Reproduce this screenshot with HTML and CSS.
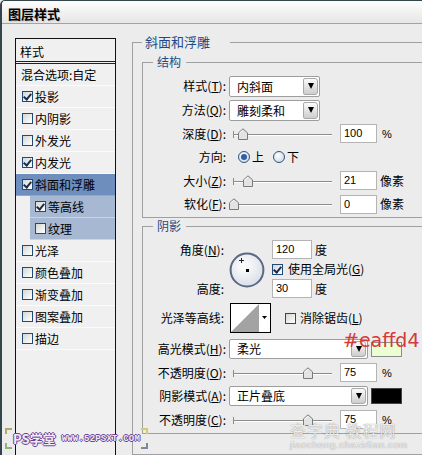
FILE: index.html
```html
<!DOCTYPE html>
<html lang="zh-CN">
<head>
<meta charset="utf-8">
<title>图层样式</title>
<link rel="stylesheet" href="styles.css">
</head>
<body>
<div class="window">
  <div class="titlebar">图层样式</div>
  <div class="dialog">
    <div class="stylelist">
      <div class="list-head">样式</div>
      <div class="list-item plain">混合选项:自定</div>
      <div class="list-item"><span class="cb checked"></span>投影</div>
      <div class="list-item"><span class="cb"></span>内阴影</div>
      <div class="list-item"><span class="cb"></span>外发光</div>
      <div class="list-item"><span class="cb checked"></span>内发光</div>
      <div class="list-item selected"><span class="cb checked"></span>斜面和浮雕</div>
      <div class="list-item sub"><span class="cb checked"></span>等高线</div>
      <div class="list-item sub"><span class="cb"></span>纹理</div>
      <div class="list-item"><span class="cb"></span>光泽</div>
      <div class="list-item"><span class="cb"></span>颜色叠加</div>
      <div class="list-item"><span class="cb"></span>渐变叠加</div>
      <div class="list-item"><span class="cb"></span>图案叠加</div>
      <div class="list-item"><span class="cb"></span>描边</div>
    </div>

    <div class="settings">
      <fieldset class="group outer">
        <legend>斜面和浮雕</legend>

        <fieldset class="group struct">
          <legend>结构</legend>
          <div class="row h24">
            <span class="lbl">样式(<u>T</u>):</span>
            <div class="select w90"><span class="val">内斜面</span><span class="btn"></span></div>
          </div>
          <div class="row h24">
            <span class="lbl">方法(<u>Q</u>):</span>
            <div class="select w90"><span class="val">雕刻柔和</span><span class="btn"></span></div>
          </div>
          <div class="row h23">
            <span class="lbl">深度(<u>D</u>):</span>
            <div class="slider"><span class="thumb" style="left:10.5%"><svg width="10" height="12" viewBox="0 0 10 12"><path d="M0.5 11.5V4.8L5 0.8 9.5 4.8v6.7z" fill="#e3e3e3" stroke="#7a7a7a"/><path d="M1.5 5.2L5 2.1" stroke="#fff" fill="none"/></svg></span></div>
            <span class="num">100</span><span class="unit">%</span>
          </div>
          <div class="row h24">
            <span class="lbl">方向:</span>
            <span class="radio on first"></span><span class="rtext">上</span>
            <span class="radio second"></span><span class="rtext">下</span>
          </div>
          <div class="row h23">
            <span class="lbl">大小(<u>Z</u>):</span>
            <div class="slider"><span class="thumb" style="left:15%"><svg width="10" height="12" viewBox="0 0 10 12"><path d="M0.5 11.5V4.8L5 0.8 9.5 4.8v6.7z" fill="#e3e3e3" stroke="#7a7a7a"/><path d="M1.5 5.2L5 2.1" stroke="#fff" fill="none"/></svg></span></div>
            <span class="num">21</span><span class="unit px">像素</span>
          </div>
          <div class="row h24">
            <span class="lbl">软化(<u>F</u>):</span>
            <div class="slider"><span class="thumb" style="left:1%"><svg width="10" height="12" viewBox="0 0 10 12"><path d="M0.5 11.5V4.8L5 0.8 9.5 4.8v6.7z" fill="#e3e3e3" stroke="#7a7a7a"/><path d="M1.5 5.2L5 2.1" stroke="#fff" fill="none"/></svg></span></div>
            <span class="num">0</span><span class="unit px">像素</span>
          </div>
        </fieldset>

        <fieldset class="group shade">
          <legend>阴影</legend>
          <div class="angle">
            <span class="lbl a1">角度(<u>N</u>):</span>
            <div class="dial">
              <svg width="36" height="36" viewBox="0 0 36 36">
                <defs>
                  <radialGradient id="dialfill" cx="42%" cy="38%" r="65%">
                    <stop offset="0" stop-color="#ffffff"/>
                    <stop offset="1" stop-color="#d9dee6"/>
                  </radialGradient>
                </defs>
                <circle cx="18" cy="18" r="16.4" fill="url(#dialfill)" stroke="#5a6884" stroke-width="2"/>
                <rect x="17" y="17" width="3" height="3" fill="#000"/>
                <path d="M12.5 6v5M10 8.5h5" stroke="#222" stroke-width="1" fill="none"/>
              </svg>
            </div>
            <div class="cell c1"><span class="num w40">120</span><span class="unit deg">度</span></div>
            <div class="cell c2"><span class="cb checked"></span><span>使用全局光(<u>G</u>)</span></div>
            <span class="lbl a3">高度:</span>
            <div class="cell c3"><span class="num w40">30</span><span class="unit deg">度</span></div>
          </div>

          <div class="row contour-row">
            <span class="lbl lbl2">光泽等高线:</span>
            <div class="contour">
              <svg width="41" height="30" viewBox="0 0 41 30">
                <rect x="0.5" y="0.5" width="40" height="29" fill="#fff" stroke="#000"/>
                <polygon points="1,29 29,1 29,29" fill="#a3a3a3"/>
                <polygon points="32,13 37,13 34.5,16" fill="#000"/>
              </svg>
            </div>
            <span class="cb anti"></span><span>消除锯齿(<u>L</u>)</span>
          </div>

          <div class="row h20 mt6">
            <span class="lbl">高光模式(<u>H</u>):</span>
            <div class="select w138"><span class="val">柔光</span><span class="btn"></span></div>
            <span class="swatch light"></span>
          </div>
          <div class="row h23 mt2">
            <span class="lbl">不透明度(<u>O</u>):</span>
            <div class="slider"><span class="thumb" style="left:75.5%"><svg width="10" height="12" viewBox="0 0 10 12"><path d="M0.5 11.5V4.8L5 0.8 9.5 4.8v6.7z" fill="#e3e3e3" stroke="#7a7a7a"/><path d="M1.5 5.2L5 2.1" stroke="#fff" fill="none"/></svg></span></div>
            <span class="num">75</span><span class="unit">%</span>
          </div>
          <div class="row h20 mt2">
            <span class="lbl">阴影模式(<u>A</u>):</span>
            <div class="select w138"><span class="val">正片叠底</span><span class="btn"></span></div>
            <span class="swatch dark"></span>
          </div>
          <div class="row h23 mt2">
            <span class="lbl">不透明度(<u>C</u>):</span>
            <div class="slider"><span class="thumb" style="left:75.5%"><svg width="10" height="12" viewBox="0 0 10 12"><path d="M0.5 11.5V4.8L5 0.8 9.5 4.8v6.7z" fill="#e3e3e3" stroke="#7a7a7a"/><path d="M1.5 5.2L5 2.1" stroke="#fff" fill="none"/></svg></span></div>
            <span class="num">75</span><span class="unit">%</span>
          </div>
        </fieldset>
      </fieldset>
    </div>
  </div>

  <div class="anno">#eaffd4</div>

  <div class="wm-left">
    <div class="bkcol"><span class="bk tl"></span><span class="bk bl"></span></div>
    <span class="wm-ps">PS学堂</span>
    <span class="wm-www">WWW.52PSXT.COM</span>
    <div class="bkcol"><span class="bk tr"></span><span class="bk br"></span></div>
  </div>

  <div class="wm-right">
    <div class="wm-cn">查字典 教程网</div>
    <div class="wm-url">jiaocheng.chazidian.com</div>
  </div>
</div>
</body>
</html>
```

FILE: styles.css
```css
* { box-sizing: border-box; }
html, body { margin: 0; padding: 0; }
body {
  width: 422px;
  height: 455px;
  overflow: hidden;
  background: #ececec;
  font-family: "Noto Sans CJK SC", "Noto Sans", sans-serif;
  font-size: 12px;
  color: #000;
}

.window {
  position: relative;
  width: 422px;
  height: 455px;
  overflow: hidden;
  background: #ececec;
  border-top: 1px solid #34444c;
  border-left: 2px solid #34444c;
  border-top-left-radius: 5px;
}

.titlebar {
  height: 23px;
  padding: 3px 0 0 6px;
  border-bottom: 1px solid #a3a3a3;
  background: linear-gradient(#fdfdfd, #e6e6e6);
  font-weight: bold;
  font-size: 13px;
  line-height: 19px;
  text-shadow: 1px 1px 0 #c9c9c9;
}

.dialog {
  display: flex;
  align-items: flex-start;
  padding: 10px 0 0 13px;
}

/* left style list */
.stylelist {
  flex-shrink: 0;
  width: 101px;
  height: 430px;
  margin-top: 4px;
  border: 1px solid #111;
  background: #f0f0f0;
}
.list-head {
  height: 25px;
  padding: 2px 0 0 4px;
  line-height: 22px;
  border-bottom: 3px double #222;
}
.list-item {
  display: flex;
  align-items: center;
  height: 22px;
  padding-left: 6px;
  border-bottom: 1px solid #fbfbfb;
  line-height: 16px;
  white-space: nowrap;
}
.list-item.plain { padding-left: 5px; }
.list-item.selected {
  background: #6e8ebd;
  border-bottom-color: #93a9cb;
}
.list-item.sub {
  margin-left: 14px;
  padding-left: 5px;
  background: #a7b8d2;
  border-bottom-color: #c9d4e4;
}

/* checkbox */
.cb {
  flex-shrink: 0;
  display: inline-flex;
  justify-content: center;
  width: 11px;
  height: 11px;
  margin-right: 2px;
  border: 1px solid #1f4b78;
  background: linear-gradient(135deg, #d6d6d0, #ffffff);
}
.cb.checked::after {
  content: "";
  width: 3px;
  height: 6px;
  border: solid #1c2e4c;
  border-width: 0 2px 2px 0;
  transform: rotate(40deg);
}

/* settings area */
.settings {
  flex-shrink: 0;
  width: 320px;
  margin-left: 16px;
}
fieldset.group {
  margin: 0;
  min-width: 0;
  border: 1px solid #a0a0a0;
}
fieldset.group > legend {
  height: 16px;
  line-height: 16px;
  color: #1f4a86;
  white-space: nowrap;
}
.outer { padding: 4px 0 20px 9px; }
.outer > legend {
  width: 88px;
  padding: 0 3px;
  font-size: 13px;
}
.struct { padding: 4px 0 1px 10px; }
.struct > legend,
.shade > legend { padding: 0 5px 0 4px; }
.shade { margin-top: 9px; padding: 6px 0 2px 10px; }

.row {
  display: flex;
  align-items: center;
  line-height: 16px;
  white-space: nowrap;
}
.h24 { height: 24px; }
.h23 { height: 23px; }
.h20 { height: 20px; }
.mt2 { margin-top: 2px; }
.mt6 { margin-top: 6px; }

.lbl {
  flex-shrink: 0;
  width: 73px;
  text-align: right;
  white-space: nowrap;
}
u { text-decoration: underline; text-underline-offset: 1px; }

/* select */
.select {
  display: flex;
  align-items: stretch;
  height: 21px;
  margin-left: 3px;
  padding: 1px;
  border: 1px solid #9d9d9d;
  border-radius: 2px;
  background: #fff;
}
.select .val {
  flex: 1;
  padding-left: 6px;
  line-height: 17px;
}
.select .btn {
  display: flex;
  align-items: center;
  justify-content: center;
  width: 15px;
  border: 1px solid #a8a8a8;
  border-radius: 2px 3px 3px 2px;
  background: linear-gradient(#fbfbfb, #cdcdcd);
}
.select .btn::after {
  content: "";
  border-left: 3.5px solid transparent;
  border-right: 3.5px solid transparent;
  border-top: 6px solid #000;
}
.w90 { width: 91px; }
.w138 { width: 139px; height: 20px; }
.w138 .val { line-height: 16px; }

/* slider */
.slider {
  position: relative;
  flex-shrink: 0;
  width: 99px;
  height: 12px;
  margin-left: 7px;
  background:
    linear-gradient(#8c8c8c, #8c8c8c) 0 3px / 1px 7px no-repeat,
    linear-gradient(#8c8c8c, #8c8c8c) 0 6px / 100% 1px no-repeat,
    linear-gradient(#ffffff, #ffffff) 0 7px / 100% 1px no-repeat;
}
.thumb {
  position: absolute;
  top: 0;
  width: 10px;
  height: 12px;
  margin-left: -5px;
}
.thumb svg { display: block; }

/* number fields */
.num {
  flex-shrink: 0;
  width: 37px;
  height: 19px;
  margin-left: 8px;
  padding-left: 3px;
  border: 1px solid #b4b4b4;
  background: #fff;
  font: 11px "Liberation Sans", Arial, sans-serif;
  line-height: 17px;
}
.num.w40 { width: 40px; margin-left: 0; }
.unit { margin-left: 5px; font-family: "Liberation Sans", "Noto Sans CJK SC", sans-serif; font-size: 11px; }
.unit.px { margin-left: 3px; font-family: "Noto Sans CJK SC", sans-serif; font-size: 12px; }
.unit.deg { margin-left: 3px; font-family: "Noto Sans CJK SC", sans-serif; font-size: 12px; }

/* radio */
.radio {
  flex-shrink: 0;
  display: inline-flex;
  align-items: center;
  justify-content: center;
  width: 12px;
  height: 12px;
  border: 1px solid #32537a;
  border-radius: 50%;
  background: radial-gradient(circle at 40% 35%, #ffffff, #c3d0e3);
}
.radio.on::after {
  content: "";
  width: 6px;
  height: 6px;
  border-radius: 50%;
  background: #2f5fa6;
}
.radio.first { margin-left: 12px; }
.radio.second { margin-left: 9px; }
.rtext { margin-left: 2px; }

/* angle block */
.angle {
  display: grid;
  grid-template-columns: 73px 46px auto;
  grid-template-rows: 19px 20px 19px;
  line-height: 16px;
  white-space: nowrap;
}
.angle .lbl { padding-right: 2px; align-self: center; }
.a1 { grid-column: 1; grid-row: 1; }
.a3 { grid-column: 1; grid-row: 3; }
.dial {
  grid-column: 2;
  grid-row: 1 / 4;
  width: 36px;
  height: 36px;
  margin: 12px 0 0 3px;
}
.dial svg { display: block; }
.cell { display: flex; align-items: center; grid-column: 3; }
.c1 { grid-row: 1; }
.c2 { grid-row: 2; }
.c2 .cb { margin-right: 5px; }
.c3 { grid-row: 3; }

.contour-row { height: 30px; margin-top: 5px; }
.lbl2 { padding-right: 2px; }
.contour { width: 41px; height: 30px; margin-left: 4px; }
.contour svg { display: block; }
.cb.anti { margin-left: 14px; margin-right: 4px; }

.swatch {
  flex-shrink: 0;
  width: 31px;
  height: 15px;
  margin-left: 3px;
  border: 1px solid #8c8c8c;
}
.swatch.light { background: #eaffd4; }
.swatch.dark { height: 16px; background: #000; border-color: #444; }

/* overlays */
.anno {
  position: absolute;
  left: 341px;
  top: 330px;
  font-family: "DejaVu Sans", sans-serif;
  font-size: 19px;
  line-height: 19px;
  color: #d43a3a;
  white-space: nowrap;
}

.wm-left {
  position: absolute;
  left: 3px;
  top: 427px;
  display: flex;
  align-items: center;
  height: 21px;
}
.bkcol {
  display: flex;
  flex-direction: column;
  justify-content: space-between;
  height: 21px;
}
.bk {
  width: 7px;
  height: 6px;
  border: 0 solid #b3a76a;
}
.bk.tl { border-top-width: 2px; border-left-width: 2px; }
.bk.bl { border-bottom-width: 2px; border-left-width: 2px; border-color: #8fb477; }
.bk.tr { border-top-width: 2px; border-right-width: 2px; border-color: #cfcf6a; }
.bk.br { border-bottom-width: 2px; border-right-width: 2px; border-color: #7c8aa0; }
.wm-ps {
  margin-left: 1px;
  font-weight: bold;
  font-size: 13px;
  line-height: 14px;
  color: #f1ebf7;
  text-shadow: 1px 0 #6b3f94, -1px 0 #6b3f94, 0 1px #6b3f94, 0 -1px #6b3f94;
}
.wm-www {
  margin: 0 1px 0 6px;
  font-family: "Liberation Mono", monospace;
  font-weight: bold;
  font-size: 9px;
  line-height: 10px;
  letter-spacing: 0.2px;
  color: #f1ebf7;
  text-shadow: 1px 0 #6b3f94, -1px 0 #6b3f94, 0 1px #6b3f94, 0 -1px #6b3f94;
}

.wm-right {
  position: absolute;
  left: 288px;
  top: 420px;
  white-space: nowrap;
}
.wm-cn {
  font-size: 16px;
  line-height: 19px;
  letter-spacing: 1px;
  color: rgba(255, 255, 255, 0.85);
  text-shadow: 0 0 1px #707070;
}
.wm-url {
  font-family: "Liberation Sans", sans-serif;
  font-size: 9.5px;
  line-height: 10px;
  letter-spacing: 0.6px;
  color: rgba(255, 255, 255, 0.9);
  text-shadow: 0 0 1px #707070;
}
```
